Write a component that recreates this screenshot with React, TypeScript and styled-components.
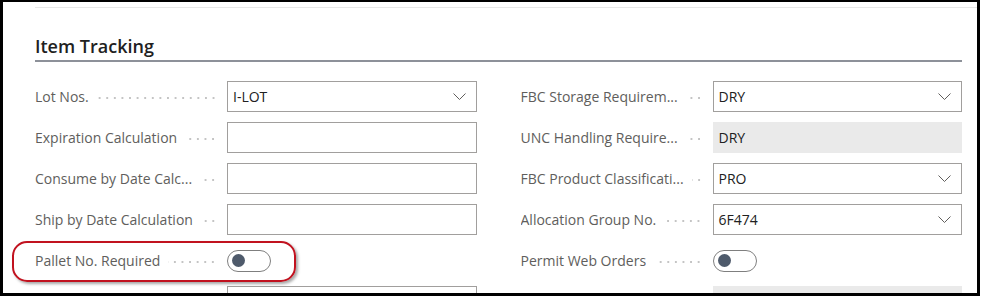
import React from "react";
import styled, { createGlobalStyle } from "styled-components";

const GlobalStyle = createGlobalStyle`
  html, body { margin: 0; padding: 0; background: #ffffff; }
  body { font-family: "Open Sans", "Noto Sans", Arial, sans-serif; }
  * { box-sizing: border-box; }
`;

const Frame = styled.div`
  position: relative;
  width: 980px;
  height: 296px;
  border-style: solid;
  border-color: #000;
  border-width: 2px 3px 3px 3px;
  background: #fff;
  overflow: hidden;
`;

const Inner = styled.div`
  padding: 5px 0 0 32px;
`;

const TopRule = styled.div`
  height: 1px;
  background: #e7e7e7;
`;

const Section = styled.section`
  padding-right: 15px;
`;

const Heading = styled.h2`
  margin: 26px 0 0 0;
  font-size: 18px;
  line-height: 24px;
  font-weight: 600;
  color: #212121;
  padding-bottom: 2px;
  border-bottom: 2px solid #8d9199;
`;

const Grid = styled.div`
  margin-top: 19px;
  display: grid;
  grid-template-columns: 1fr 1fr;
  column-gap: 44px;
`;

const Column = styled.div`
  display: flex;
  flex-direction: column;
  gap: 10px;
`;

const Row = styled.div`
  display: grid;
  grid-template-columns: 192px 1fr;
  height: 31px;
  align-items: center;
`;

const LabelCell = styled.div`
  display: flex;
  align-items: center;
  padding-right: 10px;
  min-width: 0;
`;

const LabelText = styled.span`
  font-size: 14px;
  color: #605e5c;
  white-space: nowrap;
  overflow: hidden;
`;

const Leader = styled.span`
  flex: 1;
  height: 4px;
  margin-left: 8px;
  margin-top: 3px;
  background-image: radial-gradient(circle, #c4c4c4 0.7px, transparent 1.1px);
  background-size: 7.6px 4px;
  background-repeat: repeat-x;
  background-position: right center;
`;

const Box = styled.div<{ $readOnly?: boolean }>`
  height: 31px;
  display: flex;
  align-items: center;
  padding: 0 10px 0 5px;
  border: 1px solid ${(p) => (p.$readOnly ? "transparent" : "#a19f9d")};
  background: ${(p) => (p.$readOnly ? "#eaeaea" : "#ffffff")};
  font-size: 14px;
  color: #212121;
`;

const Value = styled.span`
  flex: 1;
`;

const Toggle = styled.div`
  width: 44px;
  height: 22px;
  border: 1px solid #7f7f7f;
  border-radius: 11px;
  display: flex;
  align-items: center;
  padding-left: 4px;
`;

const Knob = styled.span`
  width: 13px;
  height: 13px;
  border-radius: 50%;
  background: #4e5a6b;
`;

const Highlight = styled.div`
  position: absolute;
  left: 9px;
  top: 239px;
  width: 284px;
  height: 41px;
  border: 2.5px solid #c1121f;
  border-radius: 15px;
  box-shadow: 2px 2px 3px rgba(0, 0, 0, 0.35);
  pointer-events: none;
`;

const Chevron = () => (
  <svg width="13" height="7" viewBox="0 0 13 7" fill="none">
    <polyline points="0.5,0.5 6.5,6.5 12.5,0.5" stroke="#605e5c" strokeWidth="1" />
  </svg>
);

type Field =
  | { label: string; kind: "select"; value: string }
  | { label: string; kind: "text"; value?: string }
  | { label: string; kind: "readonly"; value?: string }
  | { label: string; kind: "toggle" };

const left: Field[] = [
  { label: "Lot Nos.", kind: "select", value: "I-LOT" },
  { label: "Expiration Calculation", kind: "text" },
  { label: "Consume by Date Calc...", kind: "text" },
  { label: "Ship by Date Calculation", kind: "text" },
  { label: "Pallet No. Required", kind: "toggle" },
  { label: "", kind: "text" },
];

const right: Field[] = [
  { label: "FBC Storage Requirem...", kind: "select", value: "DRY" },
  { label: "UNC Handling Require...", kind: "readonly", value: "DRY" },
  { label: "FBC Product Classificati...", kind: "select", value: "PRO" },
  { label: "Allocation Group No.", kind: "select", value: "6F474" },
  { label: "Permit Web Orders", kind: "toggle" },
  { label: "", kind: "readonly" },
];

const FieldRow = ({ f }: { f: Field }) => (
  <Row>
    <LabelCell>
      {f.label && <LabelText>{f.label}</LabelText>}
      {f.label && <Leader />}
    </LabelCell>
    {f.kind === "toggle" ? (
      <Toggle>
        <Knob />
      </Toggle>
    ) : (
      <Box $readOnly={f.kind === "readonly"}>
        <Value>{"value" in f ? f.value : ""}</Value>
        {f.kind === "select" && <Chevron />}
      </Box>
    )}
  </Row>
);

export default function App() {
  return (
    <>
      <GlobalStyle />
      <Frame>
        <Inner>
          <TopRule />
          <Section>
            <Heading>Item Tracking</Heading>
            <Grid>
              <Column>
                {left.map((f, i) => (
                  <FieldRow key={i} f={f} />
                ))}
              </Column>
              <Column>
                {right.map((f, i) => (
                  <FieldRow key={i} f={f} />
                ))}
              </Column>
            </Grid>
          </Section>
        </Inner>
        <Highlight />
      </Frame>
    </>
  );
}
